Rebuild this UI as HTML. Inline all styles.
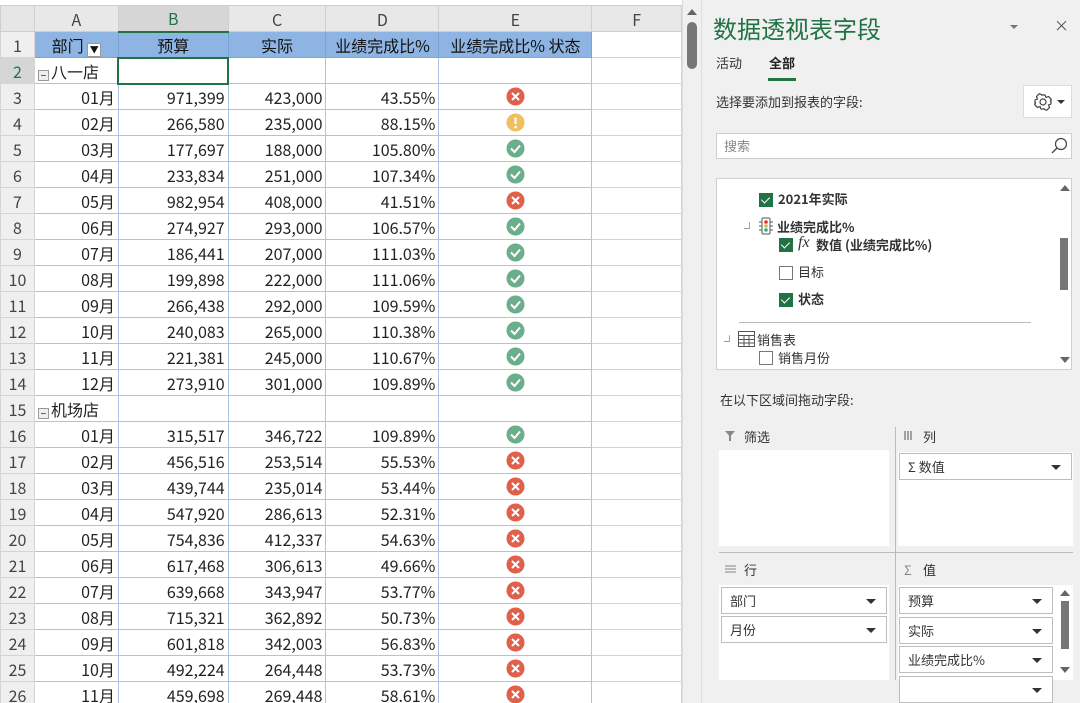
<!DOCTYPE html>
<html><head><meta charset="utf-8"><style>
*{margin:0;padding:0;box-sizing:border-box}
body{width:1080px;height:703px;overflow:hidden;background:#fff;font-family:"Noto Sans CJK SC","Liberation Sans",sans-serif;position:relative;color:#222}
#sheet{position:absolute;left:0;top:0;width:682px;height:703px;overflow:hidden}
table{border-collapse:collapse;table-layout:fixed;position:absolute;left:0;top:5px;font-size:16px}
td{height:26px;line-height:24px;border:1px solid #d4d4d4;padding:0 3px;white-space:nowrap;overflow:hidden}
tr.h td{background:#e8e8e8;color:#444;text-align:center;border-color:#cfcfcf}
td.rh{background:#efefef;color:#444;text-align:center;border-color:#d4d4d4}
td.p{border-color:#a9c4e8;text-align:right}
tr.t td.p{background:#8db4e2;text-align:center;border-color:#7aa3d6;color:#111}
td.l{text-align:left}
td.c{text-align:center}
svg.i{display:block;margin:0 auto}
#vs{position:absolute;left:682px;top:0;width:19px;height:703px;background:#f0f0f0;border-left:1px solid #ddd}
#panel{position:absolute;left:701px;top:0;width:379px;height:703px;background:#f0f0f0;border-left:1px solid #e0e0e0;font-size:13px;color:#333;line-height:18px}
.a{position:absolute}
.box{position:absolute;background:#fff;border:1px solid #cfcfcf}
.dd{position:absolute;background:#fff;border:1px solid #bdbdbd;height:27px;font-size:13px;line-height:25px;padding-left:8px}
.dd:after{content:"";position:absolute;right:10px;top:11px;border-left:5px solid transparent;border-right:5px solid transparent;border-top:5px solid #333}
.cb{position:absolute;width:14px;height:14px;background:#217346}
.cb:after{content:"";position:absolute;left:4px;top:2px;width:4px;height:7px;border-right:1.3px solid #fff;border-bottom:1.3px solid #fff;transform:rotate(45deg)}
.cbe{position:absolute;width:14px;height:14px;border:1px solid #777;background:#fff}
.mn{display:inline-block;width:11px;height:11px;border:1px solid #999;background:#eee;font-size:10px;line-height:8px;text-align:center;vertical-align:-1px;margin-right:2px}
</style></head><body>
<div id="sheet">
<table>
<colgroup><col style="width:34px"><col style="width:84px"><col style="width:110px"><col style="width:98px"><col style="width:113px"><col style="width:153px"><col style="width:90px"></colgroup>
<tr class="h"><td style="background:#e6e6e6"></td><td>A</td><td style="background:#d6d6d6;color:#217346;border-bottom:2px solid #217346">B</td><td>C</td><td>D</td><td>E</td><td>F</td></tr>
<tr class="t"><td class="rh">1</td><td class="p">部门 <span style="display:inline-block;width:14px;height:14px;border:1px solid #999;background:#fff;font-size:9px;line-height:12px;vertical-align:-1px">▼</span></td><td class="p">预算</td><td class="p">实际</td><td class="p">业绩完成比%</td><td class="p">业绩完成比% 状态</td><td></td></tr>
<tr><td class="rh" style="background:#d6d6d6;color:#217346">2</td><td class="p l"><span class="mn">−</span>八一店</td><td class="p" style="border:2px solid #217346"></td><td class="p"></td><td class="p"></td><td class="p"></td><td></td></tr>
<tr><td class="rh">3</td><td class="p">01月</td><td class="p">971,399</td><td class="p">423,000</td><td class="p">43.55%</td><td class="p c"><svg class="i" width="19" height="19"><circle cx="9.5" cy="9.5" r="9" fill="#e0604a"/><path d="M6 6L13 13M13 6L6 13" stroke="#fff" stroke-width="2"/></svg></td><td></td></tr>
<tr><td class="rh">4</td><td class="p">02月</td><td class="p">266,580</td><td class="p">235,000</td><td class="p">88.15%</td><td class="p c"><svg class="i" width="19" height="19"><circle cx="9.5" cy="9.5" r="9" fill="#f0c060"/><path d="M9.5 4.5V11" stroke="#fff" stroke-width="2.2"/><circle cx="9.5" cy="14" r="1.3" fill="#fff"/></svg></td><td></td></tr>
<tr><td class="rh">5</td><td class="p">03月</td><td class="p">177,697</td><td class="p">188,000</td><td class="p">105.80%</td><td class="p c"><svg class="i" width="19" height="19"><circle cx="9.5" cy="9.5" r="9" fill="#6bae8b"/><path d="M5 9.5L8.5 13L14 6.5" stroke="#fff" stroke-width="2" fill="none"/></svg></td><td></td></tr>
<tr><td class="rh">6</td><td class="p">04月</td><td class="p">233,834</td><td class="p">251,000</td><td class="p">107.34%</td><td class="p c"><svg class="i" width="19" height="19"><circle cx="9.5" cy="9.5" r="9" fill="#6bae8b"/><path d="M5 9.5L8.5 13L14 6.5" stroke="#fff" stroke-width="2" fill="none"/></svg></td><td></td></tr>
<tr><td class="rh">7</td><td class="p">05月</td><td class="p">982,954</td><td class="p">408,000</td><td class="p">41.51%</td><td class="p c"><svg class="i" width="19" height="19"><circle cx="9.5" cy="9.5" r="9" fill="#e0604a"/><path d="M6 6L13 13M13 6L6 13" stroke="#fff" stroke-width="2"/></svg></td><td></td></tr>
<tr><td class="rh">8</td><td class="p">06月</td><td class="p">274,927</td><td class="p">293,000</td><td class="p">106.57%</td><td class="p c"><svg class="i" width="19" height="19"><circle cx="9.5" cy="9.5" r="9" fill="#6bae8b"/><path d="M5 9.5L8.5 13L14 6.5" stroke="#fff" stroke-width="2" fill="none"/></svg></td><td></td></tr>
<tr><td class="rh">9</td><td class="p">07月</td><td class="p">186,441</td><td class="p">207,000</td><td class="p">111.03%</td><td class="p c"><svg class="i" width="19" height="19"><circle cx="9.5" cy="9.5" r="9" fill="#6bae8b"/><path d="M5 9.5L8.5 13L14 6.5" stroke="#fff" stroke-width="2" fill="none"/></svg></td><td></td></tr>
<tr><td class="rh">10</td><td class="p">08月</td><td class="p">199,898</td><td class="p">222,000</td><td class="p">111.06%</td><td class="p c"><svg class="i" width="19" height="19"><circle cx="9.5" cy="9.5" r="9" fill="#6bae8b"/><path d="M5 9.5L8.5 13L14 6.5" stroke="#fff" stroke-width="2" fill="none"/></svg></td><td></td></tr>
<tr><td class="rh">11</td><td class="p">09月</td><td class="p">266,438</td><td class="p">292,000</td><td class="p">109.59%</td><td class="p c"><svg class="i" width="19" height="19"><circle cx="9.5" cy="9.5" r="9" fill="#6bae8b"/><path d="M5 9.5L8.5 13L14 6.5" stroke="#fff" stroke-width="2" fill="none"/></svg></td><td></td></tr>
<tr><td class="rh">12</td><td class="p">10月</td><td class="p">240,083</td><td class="p">265,000</td><td class="p">110.38%</td><td class="p c"><svg class="i" width="19" height="19"><circle cx="9.5" cy="9.5" r="9" fill="#6bae8b"/><path d="M5 9.5L8.5 13L14 6.5" stroke="#fff" stroke-width="2" fill="none"/></svg></td><td></td></tr>
<tr><td class="rh">13</td><td class="p">11月</td><td class="p">221,381</td><td class="p">245,000</td><td class="p">110.67%</td><td class="p c"><svg class="i" width="19" height="19"><circle cx="9.5" cy="9.5" r="9" fill="#6bae8b"/><path d="M5 9.5L8.5 13L14 6.5" stroke="#fff" stroke-width="2" fill="none"/></svg></td><td></td></tr>
<tr><td class="rh">14</td><td class="p">12月</td><td class="p">273,910</td><td class="p">301,000</td><td class="p">109.89%</td><td class="p c"><svg class="i" width="19" height="19"><circle cx="9.5" cy="9.5" r="9" fill="#6bae8b"/><path d="M5 9.5L8.5 13L14 6.5" stroke="#fff" stroke-width="2" fill="none"/></svg></td><td></td></tr>
<tr><td class="rh">15</td><td class="p l"><span class="mn">−</span>机场店</td><td class="p"></td><td class="p"></td><td class="p"></td><td class="p"></td><td></td></tr>
<tr><td class="rh">16</td><td class="p">01月</td><td class="p">315,517</td><td class="p">346,722</td><td class="p">109.89%</td><td class="p c"><svg class="i" width="19" height="19"><circle cx="9.5" cy="9.5" r="9" fill="#6bae8b"/><path d="M5 9.5L8.5 13L14 6.5" stroke="#fff" stroke-width="2" fill="none"/></svg></td><td></td></tr>
<tr><td class="rh">17</td><td class="p">02月</td><td class="p">456,516</td><td class="p">253,514</td><td class="p">55.53%</td><td class="p c"><svg class="i" width="19" height="19"><circle cx="9.5" cy="9.5" r="9" fill="#e0604a"/><path d="M6 6L13 13M13 6L6 13" stroke="#fff" stroke-width="2"/></svg></td><td></td></tr>
<tr><td class="rh">18</td><td class="p">03月</td><td class="p">439,744</td><td class="p">235,014</td><td class="p">53.44%</td><td class="p c"><svg class="i" width="19" height="19"><circle cx="9.5" cy="9.5" r="9" fill="#e0604a"/><path d="M6 6L13 13M13 6L6 13" stroke="#fff" stroke-width="2"/></svg></td><td></td></tr>
<tr><td class="rh">19</td><td class="p">04月</td><td class="p">547,920</td><td class="p">286,613</td><td class="p">52.31%</td><td class="p c"><svg class="i" width="19" height="19"><circle cx="9.5" cy="9.5" r="9" fill="#e0604a"/><path d="M6 6L13 13M13 6L6 13" stroke="#fff" stroke-width="2"/></svg></td><td></td></tr>
<tr><td class="rh">20</td><td class="p">05月</td><td class="p">754,836</td><td class="p">412,337</td><td class="p">54.63%</td><td class="p c"><svg class="i" width="19" height="19"><circle cx="9.5" cy="9.5" r="9" fill="#e0604a"/><path d="M6 6L13 13M13 6L6 13" stroke="#fff" stroke-width="2"/></svg></td><td></td></tr>
<tr><td class="rh">21</td><td class="p">06月</td><td class="p">617,468</td><td class="p">306,613</td><td class="p">49.66%</td><td class="p c"><svg class="i" width="19" height="19"><circle cx="9.5" cy="9.5" r="9" fill="#e0604a"/><path d="M6 6L13 13M13 6L6 13" stroke="#fff" stroke-width="2"/></svg></td><td></td></tr>
<tr><td class="rh">22</td><td class="p">07月</td><td class="p">639,668</td><td class="p">343,947</td><td class="p">53.77%</td><td class="p c"><svg class="i" width="19" height="19"><circle cx="9.5" cy="9.5" r="9" fill="#e0604a"/><path d="M6 6L13 13M13 6L6 13" stroke="#fff" stroke-width="2"/></svg></td><td></td></tr>
<tr><td class="rh">23</td><td class="p">08月</td><td class="p">715,321</td><td class="p">362,892</td><td class="p">50.73%</td><td class="p c"><svg class="i" width="19" height="19"><circle cx="9.5" cy="9.5" r="9" fill="#e0604a"/><path d="M6 6L13 13M13 6L6 13" stroke="#fff" stroke-width="2"/></svg></td><td></td></tr>
<tr><td class="rh">24</td><td class="p">09月</td><td class="p">601,818</td><td class="p">342,003</td><td class="p">56.83%</td><td class="p c"><svg class="i" width="19" height="19"><circle cx="9.5" cy="9.5" r="9" fill="#e0604a"/><path d="M6 6L13 13M13 6L6 13" stroke="#fff" stroke-width="2"/></svg></td><td></td></tr>
<tr><td class="rh">25</td><td class="p">10月</td><td class="p">492,224</td><td class="p">264,448</td><td class="p">53.73%</td><td class="p c"><svg class="i" width="19" height="19"><circle cx="9.5" cy="9.5" r="9" fill="#e0604a"/><path d="M6 6L13 13M13 6L6 13" stroke="#fff" stroke-width="2"/></svg></td><td></td></tr>
<tr><td class="rh">26</td><td class="p">11月</td><td class="p">459,698</td><td class="p">269,448</td><td class="p">58.61%</td><td class="p c"><svg class="i" width="19" height="19"><circle cx="9.5" cy="9.5" r="9" fill="#e0604a"/><path d="M6 6L13 13M13 6L6 13" stroke="#fff" stroke-width="2"/></svg></td><td></td></tr>
</table>
</div>
<div id="vs">
<div class="a" style="left:4px;top:9px;border-left:5px solid transparent;border-right:5px solid transparent;border-bottom:6px solid #666"></div>
<div class="a" style="left:4px;top:22px;width:10px;height:47px;background:#777;border-radius:5px"></div>
</div>
<div id="panel">
<div class="a" style="left:11px;top:12px;font-size:24px;line-height:32px;color:#217346">数据透视表字段</div>
<div class="a" style="left:308px;top:25px;border-left:4px solid transparent;border-right:4px solid transparent;border-top:4px solid #777"></div>
<div class="a" style="left:352px;top:17px;font-size:15px;color:#555">×</div>
<div class="a" style="left:14px;top:54px;font-size:13px">活动</div>
<div class="a" style="left:67px;top:54px;font-size:13px;font-weight:bold;color:#222">全部</div>
<div class="a" style="left:66px;top:78px;width:28px;height:3px;background:#217346"></div>
<div class="a" style="left:14px;top:93px">选择要添加到报表的字段:</div>
<div class="box" style="left:321px;top:85px;width:49px;height:33px;border-color:#ddd">
<svg width="47" height="31"><g transform="translate(19,16)" fill="none" stroke="#444" stroke-width="1.2"><circle r="3"/><path d="M-2-7h4l1 2.5 2.5-1 2.8 2.8-1 2.5L8-2v4l-2.5 1 1 2.5-2.8 2.8-2.5-1L2 7h-4l-1-2.5-2.5 1-2.8-2.8 1-2.5L-8 2v-4l2.5-1-1-2.5 2.8-2.8 2.5 1z"/></g><path d="M33 14h8l-4 4z" fill="#333"/></svg></div>
<div class="box" style="left:14px;top:133px;width:356px;height:26px"><span class="a" style="left:7px;top:3px;color:#888">搜索</span>
<svg class="a" style="left:332px;top:2px" width="20" height="20"><circle cx="12" cy="8" r="5.5" fill="none" stroke="#444" stroke-width="1.2"/><path d="M8 12L3 17" stroke="#444" stroke-width="1.3"/></svg></div>
<div class="box" style="left:14px;top:178px;width:356px;height:192px;overflow:hidden">
<div class="a" style="left:343px;top:6px;border-left:5px solid transparent;border-right:5px solid transparent;border-bottom:6px solid #666"></div>
<div class="a" style="left:343px;top:59px;width:8px;height:52px;background:#777"></div>
<div class="a" style="left:343px;top:178px;border-left:5px solid transparent;border-right:5px solid transparent;border-top:6px solid #666"></div>
<div class="cb" style="left:42px;top:14px"></div><div class="a" style="left:61px;top:11px;font-weight:bold">2021年实际</div>
<div class="a" style="left:27px;top:40px;font-size:11px">┘</div>
<svg class="a" style="left:42px;top:38px" width="14" height="18"><rect x="3" y="1" width="8" height="16" rx="1" fill="#fff" stroke="#555"/><circle cx="7" cy="5" r="1.8" fill="#d33"/><circle cx="7" cy="9" r="1.8" fill="#e9b33a"/><circle cx="7" cy="13" r="1.8" fill="#3a9"/><path d="M0 5h3M0 9h3M0 13h3M11 5h3M11 9h3M11 13h3" stroke="#555"/></svg>
<div class="a" style="left:60px;top:39px;font-weight:bold">业绩完成比%</div>
<div class="cb" style="left:62px;top:59px"></div><div class="a" style="left:81px;top:55px;font-family:'Liberation Serif',serif;font-style:italic;font-size:16px">fx</div><div class="a" style="left:99px;top:57px;font-weight:bold">数值 (业绩完成比%)</div>
<div class="cbe" style="left:62px;top:87px"></div><div class="a" style="left:81px;top:84px">目标</div>
<div class="cb" style="left:62px;top:114px"></div><div class="a" style="left:81px;top:111px;font-weight:bold">状态</div>
<div class="a" style="left:22px;top:143px;width:292px;height:1px;background:#bbb"></div>
<div class="a" style="left:7px;top:153px;font-size:11px">┘</div>
<svg class="a" style="left:21px;top:152px" width="18" height="17"><rect x="0.5" y="0.5" width="16" height="15" fill="#fff" stroke="#555"/><path d="M0.5 4.5h16M0.5 8.5h16M0.5 12h16M6 4.5v11M11 4.5v11" stroke="#555"/></svg>
<div class="a" style="left:40px;top:152px">销售表</div>
<div class="cbe" style="left:42px;top:172px"></div><div class="a" style="left:61px;top:170px">销售月份</div>
</div>
<div class="a" style="left:18px;top:391px">在以下区域间拖动字段:</div>
<svg class="a" style="left:23px;top:431px" width="10" height="10"><path d="M0 0h10L6 4.5V10H4V4.5z" fill="#888"/></svg><div class="a" style="left:42px;top:428px">筛选</div>
<svg class="a" style="left:202px;top:431px" width="10" height="9"><path d="M1 0v9M4 0v9M7 0v9" stroke="#888" stroke-width="1.5"/></svg><div class="a" style="left:221px;top:428px">列</div>
<div class="a" style="left:17px;top:450px;width:170px;height:96px;background:#fff"></div>
<div class="a" style="left:193px;top:427px;width:1px;height:253px;background:#bbb"></div>
<div class="a" style="left:196px;top:452px;width:175px;height:94px;background:#fff"></div>
<div class="dd" style="left:197px;top:453px;width:173px">Σ 数值</div>
<div class="a" style="left:17px;top:552px;width:354px;height:1px;background:#bbb"></div>
<svg class="a" style="left:23px;top:565px" width="11" height="9"><path d="M0 1h11M0 4h11M0 7h11" stroke="#999" stroke-width="1.3"/></svg><div class="a" style="left:42px;top:561px">行</div>
<div class="a" style="left:202px;top:561px;color:#888">Σ</div><div class="a" style="left:221px;top:561px">值</div>
<div class="a" style="left:17px;top:585px;width:170px;height:95px;background:#fff"></div>
<div class="dd" style="left:19px;top:587px;width:166px">部门</div>
<div class="dd" style="left:19px;top:616px;width:166px">月份</div>
<div class="a" style="left:196px;top:585px;width:175px;height:95px;background:#fff"></div>
<div class="dd" style="left:197px;top:587px;width:154px">预算</div>
<div class="dd" style="left:197px;top:617px;width:154px">实际</div>
<div class="dd" style="left:197px;top:646px;width:154px">业绩完成比%</div>
<div class="dd" style="left:197px;top:676px;width:154px"></div>
<div class="a" style="left:358px;top:590px;border-left:5px solid transparent;border-right:5px solid transparent;border-bottom:6px solid #666"></div>
<div class="a" style="left:359px;top:601px;width:8px;height:48px;background:#777"></div>
<div class="a" style="left:358px;top:667px;border-left:5px solid transparent;border-right:5px solid transparent;border-top:6px solid #666"></div>
</div>
</body></html>
